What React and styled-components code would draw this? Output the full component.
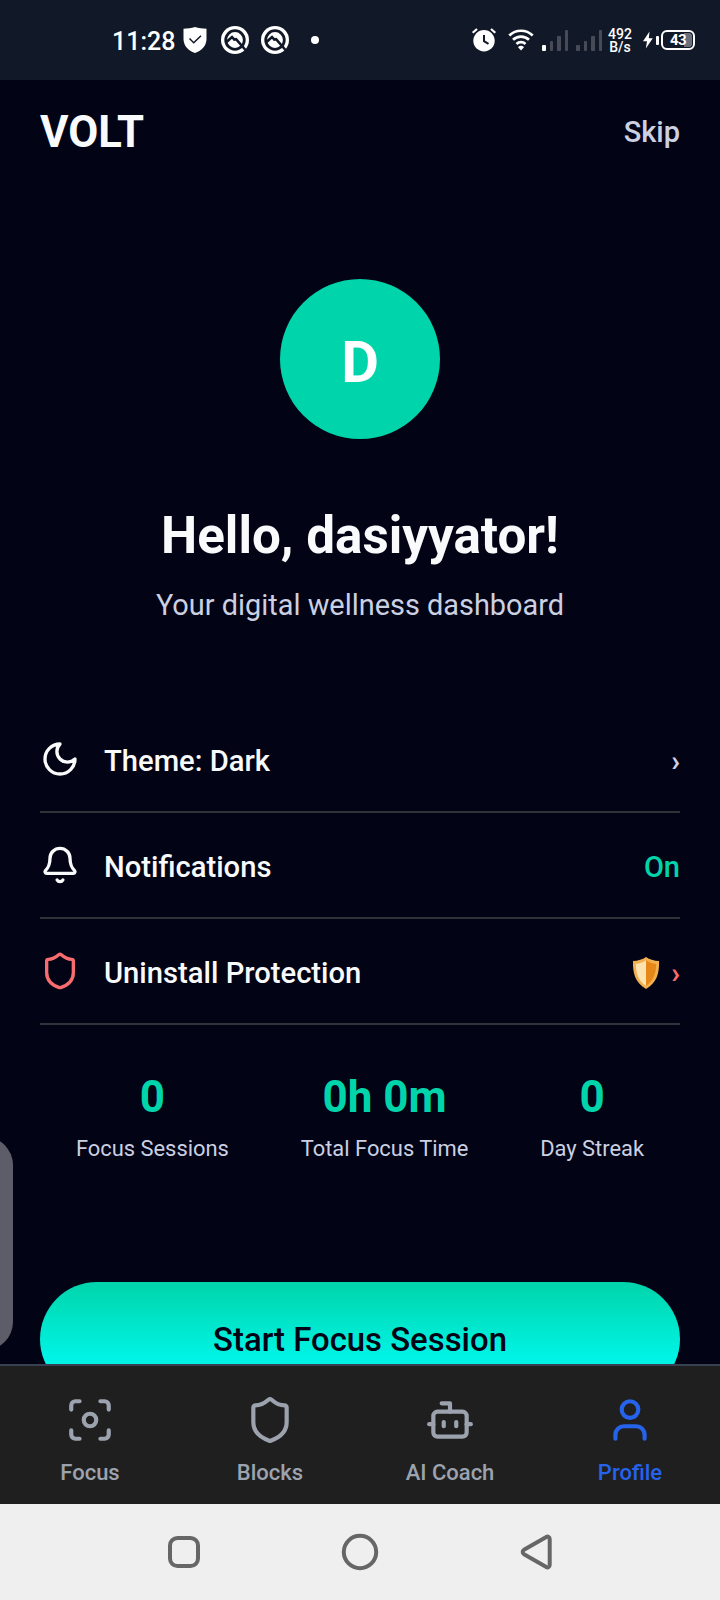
import React from 'react';
import styled, { createGlobalStyle } from 'styled-components';
import { Bell, Bot, Focus, Shield, User } from 'lucide-react';

const tabs = [
    { label: 'Focus', icon: 'focus' },
    { label: 'Blocks', icon: 'blocks' },
    { label: 'AI Coach', icon: 'coach' },
    { label: 'Profile', icon: 'profile', active: true },
];

const stats = [
    { value: '0', label: 'Focus Sessions' },
    { value: '0h 0m', label: 'Total Focus Time' },
    { value: '0', label: 'Day Streak' },
];

function TabIcon({ name }) {
    if (name === 'focus') return <Focus size={50} />;
    if (name === 'blocks') return <Shield size={50} />;
    if (name === 'coach') return <Bot size={50} />;
    return <User size={50} />;
}

function MoonIcon() {
    return (
        <svg width="40" height="40" viewBox="0 0 24 24">
            <path d="M12 3a6 6 0 0 0 9 9 9 9 0 1 1-9-9Z" fill="none" stroke="currentColor" strokeWidth="2" strokeLinecap="round" strokeLinejoin="round" />
        </svg>
    );
}

function ShieldCheck() {
    return (
        <svg width="26" height="28" viewBox="0 0 26 28">
            <path d="M13 1c3.500 1.300 7.500 1.700 11.500 1.700V13c0 6.500-4.500 11.500-11.500 14C6 24.500 1.500 19.500 1.500 13V2.700C5.500 2.700 9.500 2.300 13 1Z" fill="#fff" />
            <path d="M7.500 12.500l4.200 4.200 7.300-7" fill="none" stroke="#111827" strokeWidth="1.500" />
        </svg>
    );
}

function QBadge() {
    return (
        <svg width="30" height="30" viewBox="0 0 30 30">
            <circle cx="15" cy="15" r="14" fill="#fff" />
            <circle cx="15" cy="15" r="9.300" fill="none" stroke="#111827" strokeWidth="2.800" />
            <path d="M6.500 17L12 12l2.300 2.600 1.800-.4L25.500 25" fill="none" stroke="#111827" strokeWidth="2.600" />
        </svg>
    );
}

function AlarmIcon() {
    return (
        <svg width="26" height="26" viewBox="0 0 26 26">
            <circle cx="13" cy="13.800" r="10.700" fill="#fff" />
            <path d="M1.700 5.800L6 2M24.300 5.800L20 2" stroke="#fff" strokeWidth="2.200" />
            <path d="M13 8v6.200l4.500 2.700" fill="none" stroke="#111827" strokeWidth="2" />
        </svg>
    );
}

function WifiIcon() {
    return (
        <svg width="26" height="24" viewBox="0 0 26 24">
            <g fill="none" stroke="#fff" strokeWidth="2.700">
                <path d="M1.300 7.500a16.800 16.800 0 0 1 23.400 0" />
                <path d="M5 11.800a11.500 11.500 0 0 1 16 0" />
                <path d="M8.500 16a6.500 6.500 0 0 1 9 0" />
            </g>
            <path d="M13 22.500l-3-3.300a4 4 0 0 1 6 0Z" fill="#fff" />
        </svg>
    );
}

function BoltIcon() {
    return (
        <svg width="10" height="18" viewBox="0 0 10 18">
            <path d="M6.500 .5L0 10.200h4L2.800 17.500l7-10.300H5.800Z" fill="#fff" />
        </svg>
    );
}

function GoldShield() {
    return (
        <svg width="28" height="34" viewBox="0 0 28 34">
            <path d="M14 1C17.500 3.500 22 4.800 27 5c.5 12.500-2.500 22-13 28C3.500 27 .5 17.500 1 5 6 4.800 10.500 3.500 14 1Z" fill="#f4b04e" />
            <path d="M14 4.500C10.800 6.400 7.500 7.500 3.800 7.900 4 17.500 6.500 24.800 14 29.800Z" fill="#fde3b0" />
            <path d="M14 4.500c3.200 1.900 6.500 3 10.200 3.400-.2 9.600-2.700 16.900-10.200 21.900Z" fill="#e6871a" />
        </svg>
    );
}

export default function App() {
    return (
        <Screen>
            <GlobalStyle />
            <StatusBar>
                <Clock>11:28</Clock>
                <Notices>
                    <ShieldCheck />
                    <QBadge />
                    <QBadge />
                    <Dot />
                </Notices>
                <System>
                    <AlarmIcon />
                    <WifiIcon />
                    <Signal>
                        <Bar $h={6} $on />
                        <Bar $h={10} />
                        <Bar $h={15} />
                        <Bar $h={21} />
                    </Signal>
                    <Signal>
                        <Bar $h={6} />
                        <Bar $h={10} />
                        <Bar $h={15} />
                        <Bar $h={21} />
                    </Signal>
                    <Speed>
                        <span>492</span>
                        <span>B/s</span>
                    </Speed>
                    <BoltIcon />
                    <Nub />
                    <Battery>43</Battery>
                </System>
            </StatusBar>

            <Content>
                <Header>
                    <Brand>VOLT</Brand>
                    <Skip>Skip</Skip>
                </Header>
                <Avatar>D</Avatar>
                <Greeting>Hello, dasiyyator!</Greeting>
                <Subtitle>Your digital wellness dashboard</Subtitle>

                <Settings>
                    <Row>
                        <MoonIcon />
                        <RowLabel>Theme: Dark</RowLabel>
                        <RowEnd>
                            <Chevron>›</Chevron>
                        </RowEnd>
                    </Row>
                    <Row>
                        <Bell size={40} />
                        <RowLabel>Notifications</RowLabel>
                        <RowEnd>On</RowEnd>
                    </Row>
                    <Row>
                        <Shield size={40} color="#f86c6f" />
                        <RowLabel>Uninstall Protection</RowLabel>
                        <RowEnd>
                            <GoldShield />
                            <Chevron $danger>›</Chevron>
                        </RowEnd>
                    </Row>
                </Settings>

                <Stats>
                    {stats.map((stat) => (
                        <Stat key={stat.label}>
                            <StatValue>{stat.value}</StatValue>
                            <StatLabel>{stat.label}</StatLabel>
                        </Stat>
                    ))}
                </Stats>

                <StartButton>Start Focus Session</StartButton>
                <EdgeHandle />
            </Content>

            <TabBar>
                {tabs.map((tab) => (
                    <Tab key={tab.label} $active={tab.active}>
                        <TabIcon name={tab.icon} />
                        <span>{tab.label}</span>
                    </Tab>
                ))}
            </TabBar>

            <SystemNav>
                <svg width="36" height="40" viewBox="0 0 36 40">
                    <rect x="4" y="6" width="28" height="28" rx="7.500" />
                </svg>
                <svg width="40" height="40" viewBox="0 0 40 40">
                    <circle cx="20" cy="20" r="16.200" />
                </svg>
                <svg width="36" height="40" viewBox="0 0 36 40">
                    <path d="M28.300 4.900L6 17.800a2.500 2.500 0 0 0 0 4.400L28.300 35.100a2.300 2.300 0 0 0 3.400-2V6.900a2.300 2.300 0 0 0-3.400-2Z" />
                </svg>
            </SystemNav>
        </Screen>
    );
}

const GlobalStyle = createGlobalStyle`
    * {
        box-sizing: border-box;
    }

    body {
        margin: 0;
        background: #020314;
        font-family: Roboto, 'Liberation Sans', sans-serif;
    }

    svg {
        display: block;
        flex-shrink: 0;
    }
`;

const Screen = styled.div`
    display: flex;
    flex-direction: column;
    width: 720px;
    height: 1600px;
    overflow: hidden;
    color: #f8fafc;
    background: #020314;
`;

const StatusBar = styled.div`
    display: flex;
    align-items: center;
    flex-shrink: 0;
    height: 80px;
    padding: 0 25px 0 112px;
    color: #fff;
    background: #111827;
`;

const Clock = styled.span`
    width: 70px;
    padding-top: 3px;
    font-size: 25px;
    font-weight: 500;
    line-height: 30px;
`;

const Notices = styled.div`
    display: flex;
    align-items: center;
    gap: 10px;

    svg:first-child {
        margin-right: 2px;
    }
`;

const Dot = styled.span`
    width: 8px;
    height: 8px;
    margin-left: 11px;
    border-radius: 50%;
    background: #fff;
`;

const System = styled.div`
    display: flex;
    align-items: center;
    margin-left: auto;

    svg:nth-child(2) {
        margin: 0 8px 0 11px;
    }
`;

const Signal = styled.div`
    display: flex;
    align-items: flex-end;
    gap: 4px;
    width: 34px;
    height: 21px;

    & + & {
        width: 32px;
    }
`;

const Bar = styled.span`
    width: 3.5px;
    height: ${({ $h }) => $h}px;
    border-radius: 1px;
    background: ${({ $on }) => ($on ? '#fff' : '#464b57')};
`;

const Speed = styled.div`
    display: flex;
    flex-direction: column;
    align-items: center;
    width: 24px;
    margin-right: 11px;
    padding-top: 2px;
    font-size: 14px;
    font-weight: 500;
    line-height: 13px;
`;

const Nub = styled.span`
    width: 3px;
    height: 9px;
    margin: 0 2px 0 3px;
    border-radius: 1px;
    background: #fff;
`;

const Battery = styled.div`
    width: 34px;
    height: 20px;
    padding: 1px;
    border: 2px solid #fff;
    border-radius: 6px;
    font-size: 15px;
    font-weight: 700;
    letter-spacing: -0.5px;
    line-height: 15px;
    text-align: center;
    background: linear-gradient(to left, #6b6f7a 8px, #111827 8px) content-box;
`;

const Content = styled.main`
    position: relative;
    display: flex;
    flex-direction: column;
    height: 1284px;
    padding: 0 40px;
    overflow: hidden;
`;

const Header = styled.header`
    display: flex;
    justify-content: space-between;
    align-items: center;
    flex-shrink: 0;
    height: 103px;
`;

const Brand = styled.h1`
    margin: 0;
    padding-top: 2px;
    font-size: 43.6px;
    font-weight: 700;
    line-height: 52px;
`;

const Skip = styled.span`
    color: #cbd0e2;
    font-size: 29px;
    font-weight: 500;
`;

const Avatar = styled.div`
    display: flex;
    justify-content: center;
    align-items: center;
    flex-shrink: 0;
    align-self: center;
    width: 160px;
    height: 160px;
    margin-top: 96px;
    padding-top: 5px;
    border-radius: 50%;
    color: #fff;
    background: #00d4aa;
    font-size: 58px;
    font-weight: 700;
`;

const Greeting = styled.h2`
    margin: 66px 0 0;
    font-size: 51.2px;
    font-weight: 700;
    line-height: 62px;
    text-align: center;
`;

const Subtitle = styled.p`
    margin: 20px 0 0;
    color: #cbd0e2;
    font-size: 28.9px;
    line-height: 36px;
    text-align: center;
`;

const Settings = styled.div`
    display: flex;
    flex-direction: column;
    margin-top: 84px;
`;

const Row = styled.div`
    display: flex;
    align-items: center;
    height: 106px;
    border-bottom: 2px solid #30323a;
`;

const RowLabel = styled.span`
    flex: 1;
    margin-left: 24px;
    padding-top: 4px;
    font-size: 29.2px;
    font-weight: 500;
`;

const RowEnd = styled.span`
    display: flex;
    align-items: center;
    padding-top: 4px;
    color: #00d4aa;
    font-size: 29px;
    font-weight: 500;
`;

const Chevron = styled.span`
    margin-left: 11px;
    color: ${({ $danger }) => ($danger ? '#f86c6f' : '#cbd0e2')};
    font-weight: 700;
`;

const Stats = styled.div`
    display: flex;
    justify-content: space-around;
    margin-top: 46px;
`;

const Stat = styled.div`
    display: flex;
    flex-direction: column;
    align-items: center;
`;

const StatValue = styled.span`
    color: #00d4aa;
    font-size: 44px;
    font-weight: 700;
    line-height: 52px;
`;

const StatLabel = styled.span`
    margin-top: 12px;
    color: #cbd0e2;
    font-size: 21.9px;
    line-height: 28px;
`;

const StartButton = styled.button`
    flex-shrink: 0;
    height: 114px;
    margin-top: 119px;
    padding: 0;
    border: none;
    border-radius: 57px;
    color: #020314;
    background: linear-gradient(#00d4aa, #00f3e4 65%, #00f3e4);
    font: 500 32.9px Roboto, sans-serif;
`;

/* drawer handle that peeks in from the left edge */
const EdgeHandle = styled.span`
    position: absolute;
    left: -47px;
    top: 1057px;
    width: 60px;
    height: 213px;
    border-radius: 28px;
    background: #5c5d68;
`;

const TabBar = styled.nav`
    display: flex;
    flex-shrink: 0;
    height: 140px;
    border-top: 2px solid #374151;
    background: #1f1f1f;
`;

const Tab = styled.div`
    display: flex;
    flex-direction: column;
    align-items: center;
    flex: 1;
    padding-top: 29px;
    color: ${({ $active }) => ($active ? '#2563eb' : '#9ca3af')};
    font-size: 22px;
    font-weight: 500;

    span {
        margin-top: 15px;
        line-height: 26px;
    }
`;

const SystemNav = styled.div`
    display: flex;
    justify-content: center;
    align-items: center;
    gap: 138px;
    flex-shrink: 0;
    height: 96px;
    background: #efefef;

    svg {
        fill: none;
        stroke: #666;
        stroke-width: 4;
    }
`;
